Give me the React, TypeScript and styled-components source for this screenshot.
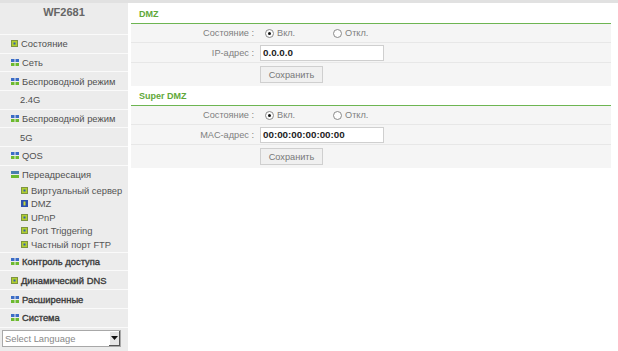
import React from "react";
import styled, { createGlobalStyle } from "styled-components";

const Global = createGlobalStyle`
  html, body { margin: 0; padding: 0; background: #ffffff; }
  body { font-family: "Liberation Sans", Arial, sans-serif; }
  * { box-sizing: border-box; }
`;

const Page = styled.div`
  display: flex;
  width: 618px;
  height: 351px;
  border-top: 3px solid #e1e1e1;
  overflow: hidden;
`;

const Sidebar = styled.div`
  width: 128px;
  flex: none;
  background: #ececec;
  display: flex;
  flex-direction: column;
`;

const Brand = styled.div`
  height: 31px;
  padding-top: 3px;
  text-align: center;
  font-size: 11px;
  font-weight: bold;
  color: #666666;
`;

const Band = styled.div<{ $strong?: boolean; $indent?: number }>`
  height: 18.7px;
  border-top: 1px solid #fafafa;
  display: flex;
  align-items: center;
  gap: 3px;
  padding-left: ${(p) => p.$indent ?? 11}px;
  font-size: 9.4px;
  color: ${(p) => (p.$strong ? "#3a3a3a" : "#505050")};
  -webkit-text-stroke: ${(p) => (p.$strong ? "0.35px #3a3a3a" : "0")};
  white-space: nowrap;
`;

const SubList = styled.div`
  display: flex;
  flex-direction: column;
  height: 68.3px;
`;

const SubItem = styled.div`
  height: 13.5px;
  display: flex;
  align-items: center;
  gap: 3px;
  padding-left: 21px;
  font-size: 9.4px;
  color: #555555;
  white-space: nowrap;
`;

const LangWrap = styled.div`
  padding: 2px 0 0 2px;
  border-top: 1px solid #fafafa;
`;

const LangSelect = styled.div`
  width: 119px;
  height: 17px;
  background: #ffffff;
  border: 1px solid #a8a8a8;
  display: flex;
  align-items: center;
  justify-content: space-between;
  font-size: 9.4px;
  color: #888888;
  padding-left: 2px;
`;

const LangArrow = styled.div`
  width: 12px;
  height: 15px;
  background: #e6e6e6;
  border-left: 1px solid #ffffff;
  box-shadow: inset -1px -1px 0 #555, inset 1px 1px 0 #fff;
  display: flex;
  align-items: center;
  justify-content: center;
`;

const Main = styled.div`
  flex: 1;
  padding: 0 7px 0 3px;
`;

const SectionTitle = styled.div<{ $h: number }>`
  height: ${(p) => p.$h}px;
  display: flex;
  align-items: center;
  padding-left: 8px;
  padding-top: 1px;
  font-size: 9px;
  font-weight: bold;
  color: #5fa83a;
  border-bottom: 1px solid #6db552;
`;

const Row = styled.div<{ $h: number; $last?: boolean }>`
  display: grid;
  grid-template-columns: 128px 1fr;
  height: ${(p) => p.$h}px;
  background: #f5f5f5;
  border-bottom: ${(p) => (p.$last ? "none" : "1px solid #e7e7e7")};
`;

const Label = styled.div`
  display: flex;
  align-items: center;
  justify-content: flex-end;
  padding-right: 5px;
  font-size: 9.2px;
  color: #808080;
  white-space: nowrap;
`;

const Value = styled.div`
  display: flex;
  align-items: center;
  padding-left: 1px;
`;

const Option = styled.label`
  width: 68px;
  display: flex;
  align-items: center;
  gap: 3px;
  padding-left: 5px;
  font-size: 9.2px;
  color: #808080;
`;

const RadioDot = styled.span<{ $on?: boolean }>`
  width: 9px;
  height: 9px;
  border-radius: 50%;
  border: 1px solid #8a8a8a;
  background: #fdfdfd;
  display: inline-flex;
  align-items: center;
  justify-content: center;
  &::after {
    content: "";
    width: 3px;
    height: 3px;
    border-radius: 50%;
    background: ${(p) => (p.$on ? "#111" : "transparent")};
  }
`;

const TextBox = styled.div`
  width: 124px;
  height: 16px;
  background: #ffffff;
  border: 1px solid #cfcfcf;
  display: flex;
  align-items: center;
  padding-left: 2px;
  font-size: 9.8px;
  font-weight: bold;
  color: #222222;
`;

const Button = styled.div`
  width: 63px;
  height: 17px;
  background: #f0f0f0;
  border: 1px solid #cfcfcf;
  display: flex;
  align-items: center;
  justify-content: center;
  font-size: 9.2px;
  color: #777777;
`;

type IconKind = "leaf" | "grid" | "open" | "sel";

const Icon = ({ kind }: { kind: IconKind }) => {
  if (kind === "grid")
    return (
      <svg width="8" height="7" viewBox="0 0 8 7">
        <rect x="0" y="0" width="3.5" height="3" fill="#3b6cc6" />
        <rect x="4.5" y="0" width="3.5" height="3" fill="#3b6cc6" />
        <rect x="0" y="4" width="3.5" height="3" fill="#6cba2f" />
        <rect x="4.5" y="4" width="3.5" height="3" fill="#6cba2f" />
      </svg>
    );
  if (kind === "open")
    return (
      <svg width="8" height="7" viewBox="0 0 8 7">
        <rect x="0" y="0" width="8" height="3" fill="#4a7fb0" />
        <rect x="0" y="4" width="8" height="3" fill="#6cba2f" />
      </svg>
    );
  if (kind === "sel")
    return (
      <svg width="7" height="7" viewBox="0 0 7 7">
        <rect x="0" y="0" width="7" height="7" fill="#2a4fae" />
        <rect x="2.5" y="1.5" width="2" height="4" fill="#c8d838" />
      </svg>
    );
  return (
    <svg width="7" height="7" viewBox="0 0 7 7">
      <rect x="0.5" y="0.5" width="6" height="6" fill="#b2cf2e" stroke="#7d9440" strokeWidth="1" />
      <rect x="2.5" y="2.5" width="2" height="2" fill="#2f5bb3" />
    </svg>
  );
};

const menuTop: { t: string; k?: IconKind; sub?: boolean }[] = [
  { t: "Состояние", k: "leaf" },
  { t: "Сеть", k: "grid" },
  { t: "Беспроводной режим", k: "grid" },
  { t: "2.4G", sub: true },
  { t: "Беспроводной режим", k: "grid" },
  { t: "5G", sub: true },
  { t: "QOS", k: "grid" },
  { t: "Переадресация", k: "open" },
];

const subs: { t: string; k: IconKind }[] = [
  { t: "Виртуальный сервер", k: "leaf" },
  { t: "DMZ", k: "sel" },
  { t: "UPnP", k: "leaf" },
  { t: "Port Triggering", k: "leaf" },
  { t: "Частный порт FTP", k: "leaf" },
];

const menuBottom: { t: string; k: IconKind }[] = [
  { t: "Контроль доступа", k: "grid" },
  { t: "Динамический DNS", k: "leaf" },
  { t: "Расширенные", k: "grid" },
  { t: "Система", k: "grid" },
];

const Section = ({
  title,
  titleH,
  field,
  value,
}: {
  title: string;
  titleH: number;
  field: string;
  value: string;
}) => (
  <>
    <SectionTitle $h={titleH}>{title}</SectionTitle>
    <Row $h={19}>
      <Label>Состояние :</Label>
      <Value>
        <Option>
          <RadioDot $on />
          Вкл.
        </Option>
        <Option>
          <RadioDot />
          Откл.
        </Option>
      </Value>
    </Row>
    <Row $h={20}>
      <Label>{field}</Label>
      <Value>
        <TextBox>{value}</TextBox>
      </Value>
    </Row>
    <Row $h={23} $last>
      <span />
      <Value>
        <Button>Сохранить</Button>
      </Value>
    </Row>
  </>
);

export default function App() {
  return (
    <>
      <Global />
      <Page>
        <Sidebar>
          <Brand>WF2681</Brand>
          {menuTop.map((m, i) => (
            <Band key={i} $indent={m.sub ? 20 : 11}>
              {m.k && <Icon kind={m.k} />}
              {m.t}
            </Band>
          ))}
          <SubList>
            {subs.map((s) => (
              <SubItem key={s.t}>
                <Icon kind={s.k} />
                {s.t}
              </SubItem>
            ))}
          </SubList>
          {menuBottom.map((m) => (
            <Band key={m.t} $strong>
              <Icon kind={m.k} />
              {m.t}
            </Band>
          ))}
          <LangWrap>
            <LangSelect>
              Select Language
              <LangArrow>
                <svg width="7" height="4" viewBox="0 0 7 4">
                  <path d="M0 0 L7 0 L3.5 4 Z" fill="#111" />
                </svg>
              </LangArrow>
            </LangSelect>
          </LangWrap>
        </Sidebar>
        <Main>
          <Section title="DMZ" titleH={21} field="IP-адрес :" value="0.0.0.0" />
          <Section title="Super DMZ" titleH={20} field="MAC-адрес :" value="00:00:00:00:00:00" />
        </Main>
      </Page>
    </>
  );
}
